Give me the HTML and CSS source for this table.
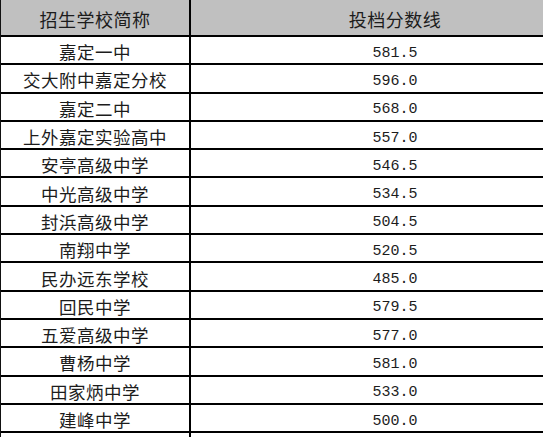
FILE: index.html
```html
<!DOCTYPE html>
<html lang="zh-CN">
<head>
<meta charset="utf-8">
<title>投档分数线</title>
<link rel="stylesheet" href="styles.css">
</head>
<body>
<div class="table">
  <div class="cell head name">招生学校简称</div>
  <div class="cell head score">投档分数线</div>

  <div class="cell name">嘉定一中</div><div class="cell score">581.5</div>
  <div class="cell name">交大附中嘉定分校</div><div class="cell score">596.0</div>
  <div class="cell name">嘉定二中</div><div class="cell score">568.0</div>
  <div class="cell name">上外嘉定实验高中</div><div class="cell score">557.0</div>
  <div class="cell name">安亭高级中学</div><div class="cell score">546.5</div>
  <div class="cell name">中光高级中学</div><div class="cell score">534.5</div>
  <div class="cell name">封浜高级中学</div><div class="cell score">504.5</div>
  <div class="cell name">南翔中学</div><div class="cell score">520.5</div>
  <div class="cell name">民办远东学校</div><div class="cell score">485.0</div>
  <div class="cell name">回民中学</div><div class="cell score">579.5</div>
  <div class="cell name">五爱高级中学</div><div class="cell score">577.0</div>
  <div class="cell name">曹杨中学</div><div class="cell score">581.0</div>
  <div class="cell name">田家炳中学</div><div class="cell score">533.0</div>
  <div class="cell name">建峰中学</div><div class="cell score">500.0</div>
  <div class="cell name tail"></div><div class="cell score tail"></div>
</div>
</body>
</html>
```

FILE: styles.css
```css
html, body {
  margin: 0;
  padding: 0;
  background: #ffffff;
  overflow: hidden;
}

.table {
  box-sizing: border-box;
  display: grid;
  grid-template-columns: 190px 1fr;
  grid-template-rows: 37px repeat(14, 28.3px) 1fr;
  border-left: 1px solid #111;
  width: 543px;
  height: 437px;
  color: #1c1c1c;
}

.cell {
  box-sizing: border-box;
  border-bottom: 2px solid #000;
  display: flex;
  align-items: center;
  justify-content: center;
  font-family: "Noto Sans CJK SC", sans-serif;
  font-size: 17.5px;
  letter-spacing: 0.5px;
  padding-top: 3px;
  white-space: nowrap;
  min-height: 0;
}

.name {
  border-right: 2px solid #000;
}

.score {
  font-family: "Liberation Mono", "DejaVu Sans Mono", monospace;
  font-size: 15px;
  letter-spacing: 0;
  padding-top: 6px;
  padding-left: 56px;
}

.head {
  background: #c0c0c0;
  font-family: "Noto Sans CJK SC", sans-serif;
  font-size: 18px;
  letter-spacing: 0.5px;
  padding-top: 3px;
}

.tail {
  border-bottom: none;
  padding: 0;
}
```
